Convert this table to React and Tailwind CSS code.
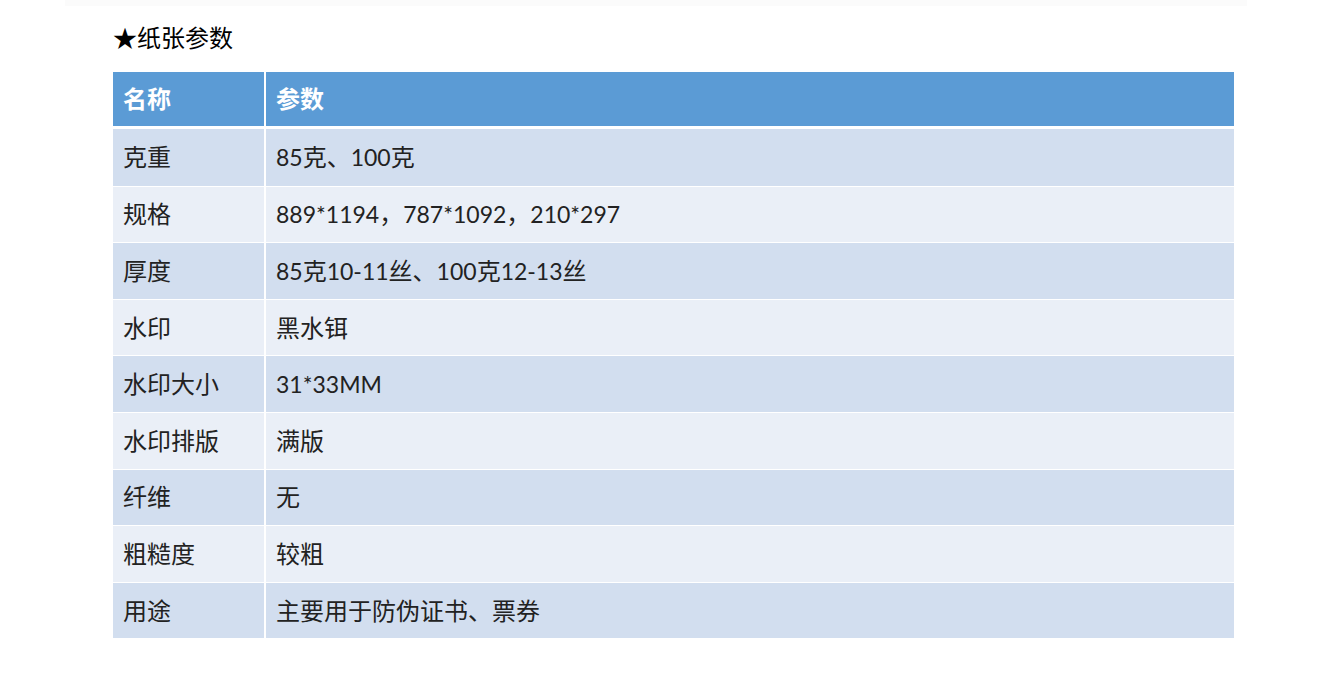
const rows = [
  ["克重", "85克、100克"],
  ["规格", "889*1194，787*1092，210*297"],
  ["厚度", "85克10-11丝、100克12-13丝"],
  ["水印", "黑水铒"],
  ["水印大小", "31*33MM"],
  ["水印排版", "满版"],
  ["纤维", "无"],
  ["粗糙度", "较粗"],
  ["用途", "主要用于防伪证书、票券"],
];

// CJK runs are set a bit larger than the Latin digits, like the original doc
function Mixed({ text }) {
  const parts = text.split(/([\u3000-\u9fff\uff00-\uffef]+)/).filter(Boolean);
  return (
    <span>
      {parts.map((p, i) =>
        /[\u3000-\u9fff\uff00-\uffef]/.test(p) ? (
          <span key={i} className="text-[24px]">{p}</span>
        ) : (
          <span key={i} className="text-[23px]">{p}</span>
        )
      )}
    </span>
  );
}

export default function App() {
  return (
    <div className="w-[1322px] h-[688px] bg-white relative overflow-hidden font-['Lato','Noto_Sans_CJK_SC',sans-serif]">
      <div className="ml-[65px] w-[1182px] h-[6px] bg-[#fbfbfb]" />

      <div className="ml-[113px] w-[1121px]">
        <h2 className="mt-[14px] h-[36px] flex items-center text-[24px] text-black leading-none">
          ★纸张参数
        </h2>

        <div className="mt-[16px] flex h-[54px] bg-[#5b9bd5] text-white font-bold text-[24px]">
          <div className="w-[153px] pl-[10px] flex items-center border-r-2 border-white">名称</div>
          <div className="flex-1 pl-[10px] flex items-center">参数</div>
        </div>

        <div className="mt-[3px]">
          {rows.map(([name, value], i) => (
            <div
              key={name}
              className={`flex h-[56.6px] text-[#222222] ${
                i > 0 ? "border-t border-white" : ""
              } ${i % 2 === 0 ? "bg-[#d2deef]" : "bg-[#eaeff7]"}`}
            >
              <div className="w-[153px] pl-[10px] flex items-center border-r-2 border-white text-[24px]">{name}</div>
              <div className="flex-1 pl-[10px] flex items-center">
                <Mixed text={value} />
              </div>
            </div>
          ))}
        </div>
      </div>
    </div>
  );
}
